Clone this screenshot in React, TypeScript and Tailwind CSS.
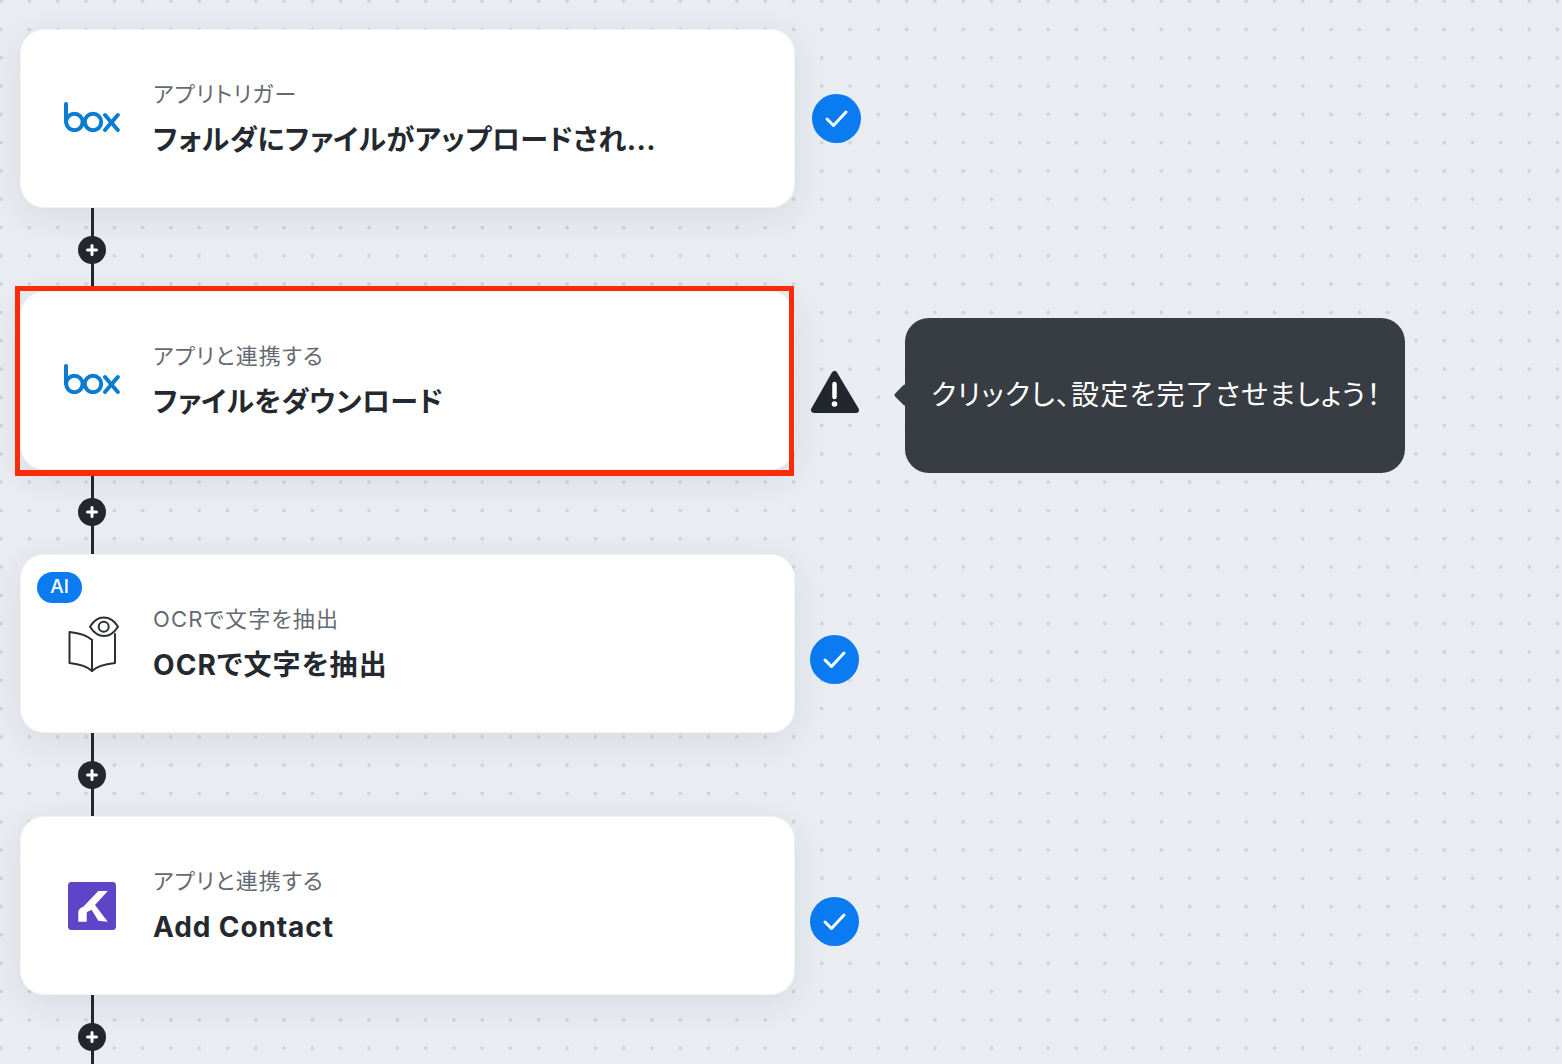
import type { ReactNode } from "react";

function BoxLogo() {
  return (
    <svg className="mb-[4px]" width="56" height="30" viewBox="0 0 56 30" fill="none" stroke="#0b7dd0" strokeWidth="4" strokeLinecap="round">
      <line x1="2" y1="2" x2="2" y2="20" />
      <circle cx="10.4" cy="20" r="8.2" />
      <circle cx="29" cy="20" r="8.2" />
      <line x1="41" y1="13" x2="53.8" y2="28" />
      <line x1="53.8" y1="13" x2="41" y2="28" />
    </svg>
  );
}

function BookEyeIcon() {
  return (
    <svg className="mt-[2px]" width="56" height="60" viewBox="0 0 56 60" fill="none" stroke="#2b3036" strokeWidth="2" strokeLinejoin="round" strokeLinecap="round">
      <path d="M28 26C23 21 14 19 5.5 18V49C14 50 23 52 28 57C33 52 42 50 51 49V20" />
      <path d="M28 26V57" />
      <path d="M26 12.7C30 6 34 3.5 39.7 3.5C45 3.5 50 6 54 12.7C50 19 45 22 40 22C34 22 30 19 26 12.7Z" fill="#fff" />
      <circle cx="39.7" cy="12.7" r="5" />
    </svg>
  );
}

function KLogo() {
  return (
    <svg className="mt-[2px]" width="56" height="48" viewBox="0 0 56 48">
      <rect x="4" y="0" width="48" height="48" rx="3.5" fill="#5e45c8" />
      <path
        d="M43.7 9H34.3L19.3 24.7C16 26 14.3 27.5 14.3 30.5V39.7H22.7V31C22.7 29.5 25.7 28.5 27.7 28L34.3 38.7L43.7 39.7L31 23Z"
        fill="#fff"
      />
    </svg>
  );
}

function CheckBadge() {
  return (
    <svg width="49" height="49" viewBox="0 0 49 49">
      <circle cx="24.5" cy="24.5" r="24.5" fill="#0a7bf0" />
      <path d="M15 25L21.5 31.5L34 18" fill="none" stroke="#fff" strokeWidth="3" strokeLinecap="round" strokeLinejoin="round" />
    </svg>
  );
}

function WarningIcon() {
  return (
    <svg width="48" height="44" viewBox="0 0 48 44">
      <path d="M23.5 4L3 40H45Z" fill="#22272e" stroke="#22272e" strokeWidth="6" strokeLinejoin="round" />
      <path d="M23.5 14V27" stroke="#fff" strokeWidth="4.5" strokeLinecap="round" />
      <circle cx="23.5" cy="34" r="2.8" fill="#fff" />
    </svg>
  );
}

function Connector() {
  return (
    <div className="relative flex h-[83.33px] w-[775px] flex-col pl-[70.5px]">
      <div className="h-full w-[3px] bg-[#23282e]" />
      <div className="absolute left-[58px] top-[28px] flex h-[28px] w-[28px] items-center justify-center rounded-full bg-[#23282e]">
        <svg width="14" height="14" viewBox="0 0 14 14" stroke="#fff" strokeWidth="3" strokeLinecap="round">
          <line x1="7" y1="2.5" x2="7" y2="11.5" />
          <line x1="2.5" y1="7" x2="11.5" y2="7" />
        </svg>
      </div>
    </div>
  );
}

function FlowCard({
  icon,
  label,
  title,
  titleClass,
  badge,
}: {
  icon: ReactNode;
  label: string;
  title: string;
  titleClass: string;
  badge?: boolean;
}) {
  return (
    <div className="relative flex h-[179px] w-[775px] shrink-0 items-center rounded-[24px] border border-[#f1f3f6] bg-white pl-[43px] shadow-[0_8px_36px_rgba(40,50,70,0.09)]">
      {badge && (
        <span className="absolute left-[16px] top-[17px] flex h-[31px] w-[45px] items-center justify-center rounded-full bg-[#0a7bf0] text-[19px] font-medium text-white">
          AI
        </span>
      )}
      <div className="flex w-[56px] justify-center">{icon}</div>
      <div className="ml-[33px] flex flex-col pb-[3px] [font-feature-settings:'palt']">
        <span className="text-[22px] leading-[30px] tracking-[1.15px] text-[#646a72]">{label}</span>
        <span className={`mt-[16px] text-[28px] font-bold leading-[30px] text-[#24292f] ${titleClass}`}>{title}</span>
      </div>
    </div>
  );
}

export default function App() {
  return (
    <div
      className="h-[1064px] w-[1562px] overflow-hidden bg-[#e9ecf1] bg-[radial-gradient(circle,#cdd2db_1.7px,transparent_2.2px)] bg-[length:28.3px_28.3px] bg-[position:-13px_-13px] pl-[20px] pt-[29px]"
      style={{ fontFamily: 'Inter, "Noto Sans CJK JP", sans-serif' }}
    >
      <div className="flex items-center gap-[17px]">
        <FlowCard
          icon={<BoxLogo />}
          label="アプリトリガー"
          title="フォルダにファイルがアップロードされ..."
          titleClass="tracking-[0.44px]"
        />
        <CheckBadge />
      </div>
      <Connector />

      <div className="relative flex items-center gap-[16px]">
        <FlowCard
          icon={<BoxLogo />}
          label="アプリと連携する"
          title="ファイルをダウンロード"
          titleClass="tracking-[0.35px]"
        />
        <div className="mt-[22px]">
          <WarningIcon />
        </div>
        {/* tooltip sits over the canvas beside the step */}
        <div className="absolute left-[885px] top-[27px] flex h-[155px] w-[500px] items-center rounded-[24px] bg-[#383c43] pb-[2px] pl-[26px] text-[28px] tracking-[1.2px] text-white [font-feature-settings:'palt']">
          <span className="absolute left-[-8px] top-[69px] h-[16px] w-[16px] rotate-45 rounded-[2px] bg-[#383c43]" />
          クリックし、設定を完了させましょう！
        </div>
        {/* red highlight drawn over the selected step */}
        <div className="pointer-events-none absolute left-[-5px] top-[-5px] z-10 h-[190px] w-[779px] border-[5px] border-b-[6px] border-[#fb2a0a]" />
      </div>
      <Connector />

      <div className="flex items-center gap-[15px]">
        <FlowCard
          badge
          icon={<BookEyeIcon />}
          label="OCRで文字を抽出"
          title="OCRで文字を抽出"
          titleClass="tracking-[1.1px]"
        />
        <div className="mt-[32px]">
          <CheckBadge />
        </div>
      </div>
      <Connector />

      <div className="flex items-center gap-[15px]">
        <FlowCard icon={<KLogo />} label="アプリと連携する" title="Add Contact" titleClass="tracking-[0.9px]" />
        <div className="mt-[32px]">
          <CheckBadge />
        </div>
      </div>
      <Connector />
    </div>
  );
}
